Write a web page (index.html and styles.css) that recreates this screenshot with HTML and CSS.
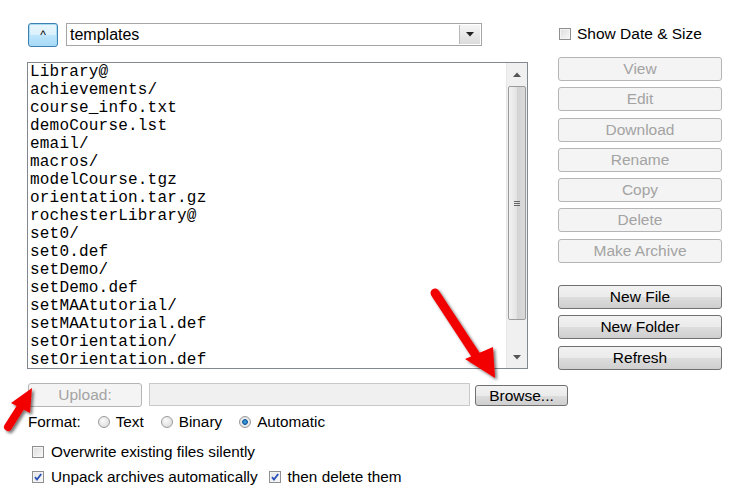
FILE: index.html
```html
<!DOCTYPE html>
<html>
<head>
<meta charset="utf-8">
<link rel="stylesheet" href="styles.css">
</head>
<body>
<div class="app">
  <div class="main">
    <div class="left">
      <div class="toprow">
        <div class="btn-up">^</div>
        <div class="select">
          <span class="select-text">templates</span>
          <span class="select-arrow"><svg width="8" height="5" viewBox="0 0 8 5"><path d="M0 0H8L4 4.5Z" fill="#222"/></svg></span>
        </div>
      </div>
      <div class="listbox">
        <div class="items">
          <div>Library@</div>
          <div>achievements/</div>
          <div>course_info.txt</div>
          <div>demoCourse.lst</div>
          <div>email/</div>
          <div>macros/</div>
          <div>modelCourse.tgz</div>
          <div>orientation.tar.gz</div>
          <div>rochesterLibrary@</div>
          <div>set0/</div>
          <div>set0.def</div>
          <div>setDemo/</div>
          <div>setDemo.def</div>
          <div>setMAAtutorial/</div>
          <div>setMAAtutorial.def</div>
          <div>setOrientation/</div>
          <div>setOrientation.def</div>
        </div>
        <div class="scrollbar">
          <div class="sb-arrow"><svg width="8" height="5" viewBox="0 0 8 5"><path d="M0 5H8L4 0.5Z" fill="#555"/></svg></div>
          <div class="sb-thumb"><span class="grip"></span><span class="grip"></span><span class="grip"></span></div>
          <div class="sb-arrow down"><svg width="8" height="5" viewBox="0 0 8 5"><path d="M0 0H8L4 4.5Z" fill="#555"/></svg></div>
        </div>
      </div>
    </div>
    <div class="right">
      <div class="chk-row top">
        <span class="chk"></span>
        <span>Show Date &amp; Size</span>
      </div>
      <div class="btn-group">
        <div class="btn disabled">View</div>
        <div class="btn disabled">Edit</div>
        <div class="btn disabled">Download</div>
        <div class="btn disabled">Rename</div>
        <div class="btn disabled">Copy</div>
        <div class="btn disabled">Delete</div>
        <div class="btn disabled">Make Archive</div>
      </div>
      <div class="btn-group second">
        <div class="btn">New File</div>
        <div class="btn">New Folder</div>
        <div class="btn">Refresh</div>
      </div>
    </div>
  </div>
  <div class="upload-row">
    <div class="btn disabled upload">Upload:</div>
    <div class="file-box"></div>
    <div class="btn browse">Browse...</div>
  </div>
  <div class="format-row">
    <span class="fmt-label">Format:</span>
    <span class="radio"></span><span class="rlabel">Text</span>
    <span class="radio"></span><span class="rlabel">Binary</span>
    <span class="radio on"></span><span class="rlabel">Automatic</span>
  </div>
  <div class="chk-row opt">
    <span class="chk"></span>
    <span>Overwrite existing files silently</span>
  </div>
  <div class="chk-row opt">
    <span class="chk on"><svg width="10" height="10" viewBox="0 0 10 10"><path d="M2 5.2L4 7.6L8.2 2" fill="none" stroke="#2a50b8" stroke-width="1.8"/></svg></span>
    <span class="lbl-gap">Unpack archives automatically</span>
    <span class="chk on"><svg width="10" height="10" viewBox="0 0 10 10"><path d="M2 5.2L4 7.6L8.2 2" fill="none" stroke="#2a50b8" stroke-width="1.8"/></svg></span>
    <span>then delete them</span>
  </div>

  <svg class="arrow arrow-browse" width="80" height="100" viewBox="0 0 80 100">
    <defs>
      <filter id="sh" x="-30%" y="-30%" width="160%" height="160%">
        <feDropShadow dx="2" dy="2" stdDeviation="1.5" flood-color="#000" flood-opacity="0.55"/>
      </filter>
    </defs>
    <g filter="url(#sh)">
      <line x1="12" y1="10" x2="54" y2="74" stroke="#f20000" stroke-width="9" stroke-linecap="round"/>
      <path d="M42 76L70 64L72 95Z" fill="#f20000"/>
    </g>
  </svg>
  <svg class="arrow arrow-upload" width="45" height="55" viewBox="0 0 45 55">
    <defs>
      <filter id="sh2" x="-40%" y="-40%" width="180%" height="180%">
        <feDropShadow dx="2" dy="2" stdDeviation="1.5" flood-color="#000" flood-opacity="0.55"/>
      </filter>
    </defs>
    <g filter="url(#sh2)">
      <line x1="8" y1="46" x2="22" y2="24" stroke="#f20000" stroke-width="8" stroke-linecap="round"/>
      <path d="M11 22L32 7L30 32Z" fill="#f20000"/>
    </g>
  </svg>
</div>
</body>
</html>
```
FILE: styles.css
```css
html, body {
  margin: 0;
  padding: 0;
  background: #fff;
}
body {
  font-family: "Liberation Sans", Arial, sans-serif;
  font-size: 15.3px;
  color: #000;
}
.app {
  position: relative;
  width: 748px;
  height: 494px;
  padding: 23px 0 0 27px;
  box-sizing: border-box;
}
.main {
  display: flex;
  height: 346px;
}
.left {
  width: 501px;
}
.toprow {
  display: flex;
  align-items: flex-start;
  gap: 8px;
  height: 39px;
  padding-left: 1px;
}
.btn-up {
  width: 30px;
  height: 24px;
  box-sizing: border-box;
  border: 1px solid #3c7fb1;
  border-radius: 3px;
  background: linear-gradient(#eaf6fd, #d9f0fc 50%, #bee6fd 51%, #a7d9f5);
  box-shadow: inset 0 0 0 1px #a8dcf5;
  text-align: center;
  font-size: 12px;
  line-height: 22px;
}
.select {
  width: 416px;
  height: 23px;
  box-sizing: border-box;
  border: 1px solid #a5a5a5;
  display: flex;
  align-items: stretch;
  background: #fff;
}
.select-text {
  flex: 1;
  font-size: 16px;
  line-height: 22px;
  padding-left: 3px;
}
.select-arrow {
  width: 20px;
  border-left: 1px solid #b8b8b8;
  background: linear-gradient(#f5f5f5, #dcdcdc);
  display: flex;
  align-items: center;
  justify-content: center;
  margin: 1px;
}
.listbox {
  height: 307px;
  box-sizing: border-box;
  border: 1px solid #828790;
  display: flex;
  background: #fff;
}
.items {
  flex: 1;
  padding: 0 0 0 2px;
  font-family: "Liberation Mono", "Courier New", monospace;
  font-size: 16px;
  letter-spacing: 0.2px;
  line-height: 18px;
  overflow: hidden;
}
.scrollbar {
  width: 20px;
  display: flex;
  flex-direction: column;
  background: #f0f0f0;
  border-left: 1px solid #e6e6e6;
}
.sb-arrow {
  height: 22px;
  display: flex;
  align-items: center;
  justify-content: center;
}
.sb-arrow.down {
  height: 48px;
  align-items: flex-end;
  padding-bottom: 8px;
  box-sizing: border-box;
}
.sb-thumb {
  flex: 1;
  margin: 1px 1px 0 1px;
  border: 1px solid #9b9b9b;
  border-radius: 2px;
  background: linear-gradient(90deg, #f3f3f3, #e2e2e2 50%, #d3d3d3 51%, #dadada);
  display: flex;
  flex-direction: column;
  align-items: center;
  justify-content: center;
  gap: 1px;
}
.grip {
  width: 6px;
  height: 1px;
  background: #666;
}
.right {
  margin-left: 30px;
  width: 164px;
}
.chk-row {
  display: flex;
  align-items: center;
}
.chk-row.top {
  height: 22px;
  margin-left: 1px;
  margin-bottom: 12px;
  font-size: 15.5px;
}
.chk-row.top .chk {
  margin-right: 6px;
}
.chk {
  width: 12px;
  height: 12px;
  box-sizing: border-box;
  border: 1px solid #8e8f8f;
  background: linear-gradient(135deg, #dcdcdc, #f8f8f8);
  box-shadow: inset 0 0 0 1px #f4f4f4;
  display: inline-flex;
  align-items: center;
  justify-content: center;
  margin-right: 7px;
  flex: none;
}
.chk.on {
  background: linear-gradient(135deg, #e4e4e4, #fafafa);
}
.btn-group {
  display: flex;
  flex-direction: column;
  gap: 6.3px;
}
.btn-group.second {
  margin-top: 22px;
  gap: 6.5px;
}
.btn {
  height: 24px;
  box-sizing: border-box;
  border: 1px solid #707070;
  border-radius: 3px;
  background: linear-gradient(#f2f2f2, #ebebeb 50%, #dddddd 51%, #cfcfcf);
  text-align: center;
  font-size: 15.5px;
  line-height: 22px;
  color: #000;
}
.btn.disabled {
  border-color: #b5b5b5;
  background: #f4f4f4;
  color: #a3a3a3;
}
.upload-row {
  display: flex;
  align-items: center;
  height: 25px;
  margin-top: 13px;
  padding-left: 1px;
}
.upload {
  width: 114px;
}
.file-box {
  width: 321px;
  height: 23px;
  box-sizing: border-box;
  margin-left: 7px;
  border: 1px solid #c9c9c9;
  background: #f0f0f0;
}
.browse {
  width: 93px;
  height: 21px;
  line-height: 19px;
  margin-left: 5px;
  margin-top: 2px;
}
.format-row {
  display: flex;
  align-items: center;
  height: 20px;
  margin-top: 5px;
  padding-left: 1px;
}
.fmt-label {
  margin-right: 17px;
}
.radio {
  width: 12px;
  height: 12px;
  box-sizing: border-box;
  border-radius: 50%;
  border: 1px solid #9a9a9a;
  background: radial-gradient(circle at 40% 35%, #fafafa, #d6d6d6);
  margin-right: 6px;
  flex: none;
}
.radio.on {
  background: radial-gradient(circle, #4fb3f0 0, #0d5a9c 2.5px, #f0f0f0 3.2px, #d6d6d6 6px);
}
.rlabel {
  margin-right: 17px;
}
.chk-row.opt {
  height: 22px;
  padding-left: 5px;
  margin-top: 3px;
}
.format-row + .chk-row.opt {
  margin-top: 9px;
}
.lbl-gap {
  margin-right: 11px;
}
.arrow {
  position: absolute;
  overflow: visible;
}
.arrow-browse {
  left: 423px;
  top: 283px;
}
.arrow-upload {
  left: 0px;
  top: 381px;
}
```
